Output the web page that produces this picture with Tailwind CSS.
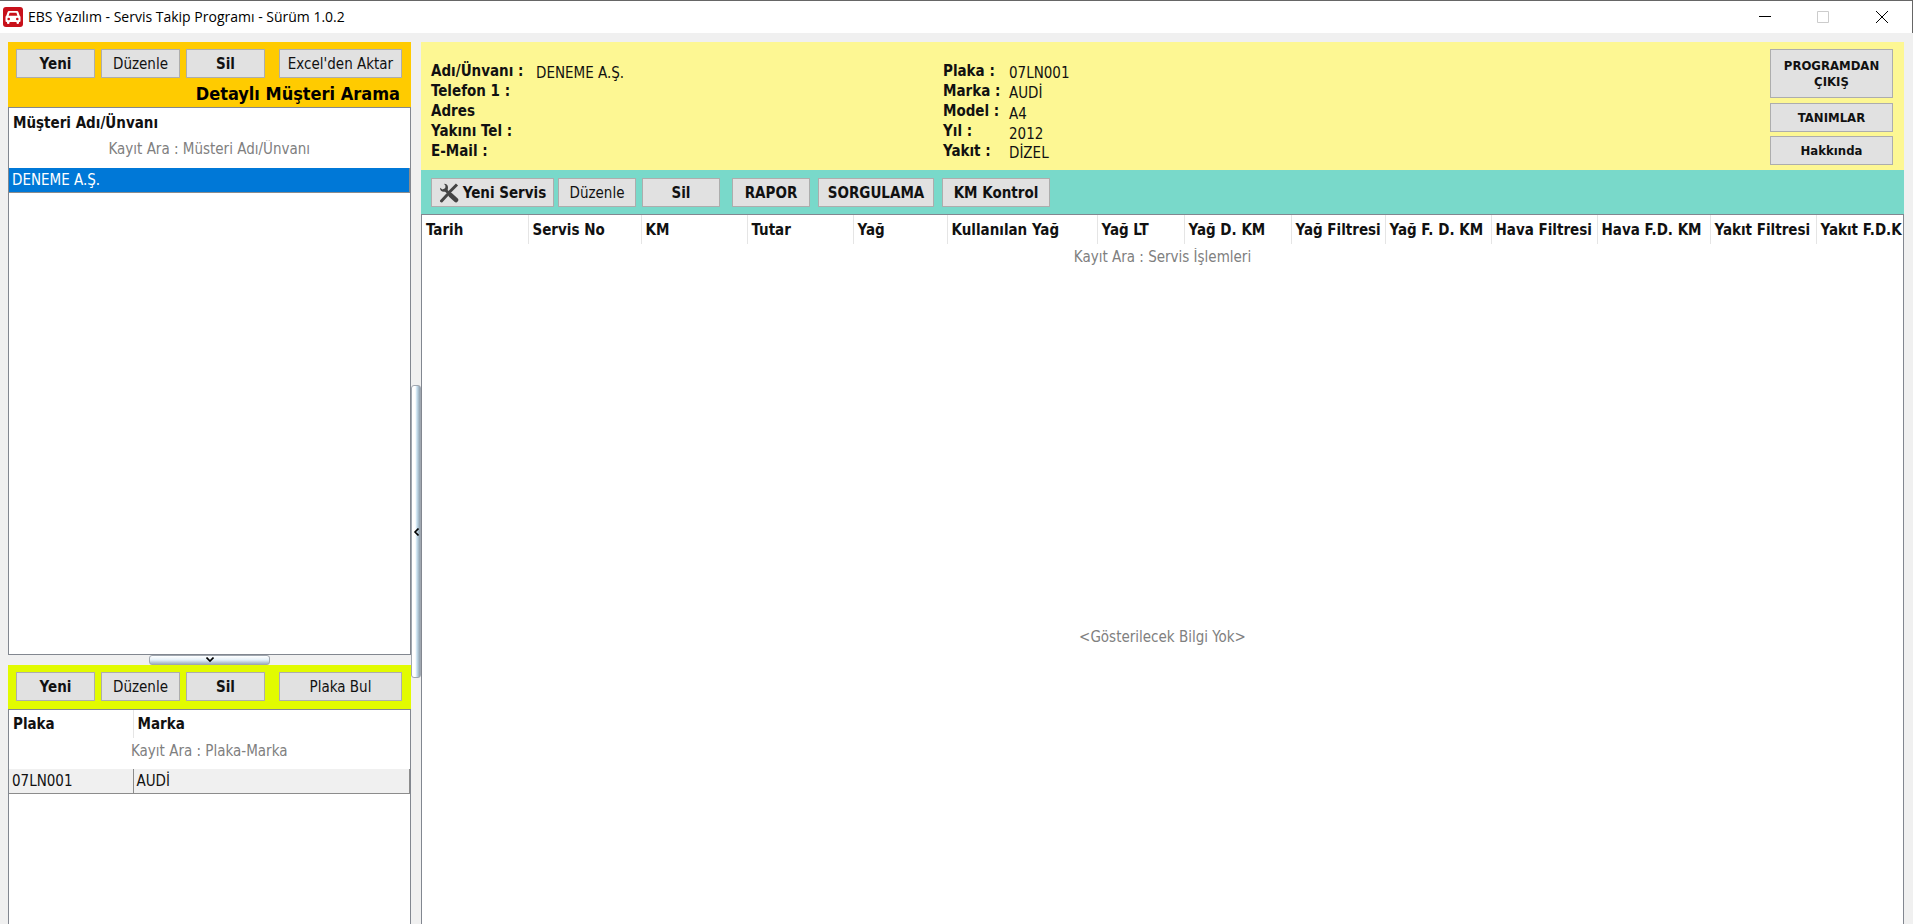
<!DOCTYPE html>
<html lang="tr">
<head>
<meta charset="utf-8">
<title>EBS Yazılım - Servis Takip Programı</title>
<script src="https://cdn.jsdelivr.net/npm/@tailwindcss/browser@4"></script>
</head>
<body class="flex h-screen flex-col overflow-hidden bg-[#f0f0f0] font-['DejaVu_Sans_Condensed','DejaVu_Sans',sans-serif] text-[15px] leading-5 text-[#111]">

<header class="flex h-[33px] shrink-0 items-center border-t border-r border-[#666] bg-white pl-[3px] font-['Open_Sans',sans-serif] text-sm text-black">
  <svg class="h-5 w-5" viewBox="0 0 20 20" aria-hidden="true">
    <rect width="20" height="20" rx="3" fill="#c8101a"/>
    <path fill="#fff" d="M6 4h8q1 0 1.400 1l1.200 3.500q.9.500.9 1.500v4q0 1-1 1h-.5v1q0 1-1.200 1t-1.300-1v-1h-7v1q0 1-1.300 1t-1.200-1v-1h-.5q-1 0-1-1v-4q0-1 .9-1.500l1.200-3.500q.4-1 1.400-1zM6.600 5.800l-1 3h8.800l-1-3z"/>
    <circle cx="5.700" cy="12" r="1.300" fill="#c8101a"/><circle cx="14.300" cy="12" r="1.300" fill="#c8101a"/>
  </svg>
  <h1 class="ml-[5px] grow">EBS Yazılım - Servis Takip Programı - Sürüm 1.0.2</h1>
  <button class="grid h-full w-[58px] place-items-center" aria-label="Simge durumuna küçült"><svg width="12" height="12"><path d="M0 5.500h12" stroke="#000"/></svg></button>
  <button class="grid h-full w-[58px] place-items-center" aria-label="Ekranı kapla" disabled><svg width="12" height="12"><path d="M.5.500h11v11H.5z" fill="none" stroke="#ccc"/></svg></button>
  <button class="grid h-full w-[60px] place-items-center" aria-label="Kapat"><svg width="12" height="12"><path d="M0 0l12 12M12 0L0 12" stroke="#000"/></svg></button>
</header>

<div class="flex min-h-0 grow pt-[9px] pr-[9px] pl-2">

  <aside class="flex w-[403px] shrink-0 flex-col">
    <section class="bg-[#ffcb00] px-2 pt-[7px]">
      <div class="flex">
        <button class="h-[29px] w-[79px] border border-[#adadad] bg-[#e1e1e1] font-bold">Yeni</button>
        <button class="ml-[6px] h-[29px] w-[79px] border border-[#adadad] bg-[#e1e1e1]">Düzenle</button>
        <button class="ml-[6px] h-[29px] w-[79px] border border-[#adadad] bg-[#e1e1e1] font-bold">Sil</button>
        <button class="ml-[14px] h-[29px] w-[123px] border border-[#adadad] bg-[#e1e1e1]">Excel'den Aktar</button>
      </div>
      <div class="pt-1 pr-[3px] pb-[1px] text-right"><a href="#arama" class="text-lg leading-6 font-bold text-black">Detaylı Müşteri Arama</a></div>
    </section>

    <section class="h-[548px] shrink-0 border border-[#828790] bg-white">
      <table class="w-full table-fixed border-collapse">
        <thead>
          <tr class="h-[29px]"><th class="pl-1 text-left font-bold">Müşteri Adı/Ünvanı</th></tr>
          <tr class="h-[31px]"><td class="align-top"><input class="block h-[24px] w-full text-center placeholder:text-[#808080]" aria-label="Müşteri ara" placeholder="Kayıt Ara : Müsteri Adı/Ünvanı"></td></tr>
        </thead>
        <tbody><tr class="h-6 border-r border-b border-[#8c8c8c] bg-[#0078d7] text-white"><td class="pl-[3px]">DENEME A.Ş.</td></tr></tbody>
      </table>
    </section>

    <button class="grid h-[10px] w-[121px] shrink-0 place-items-center self-center rounded-[3px] border border-[#a0a7b0] bg-linear-to-b from-white via-[#e4f0f8] to-[#9fb0c0]" aria-label="Üst bölümü daralt"><svg width="8" height="6"><path d="M.5.500L4 4 7.500.500" fill="none" stroke="#000" stroke-width="1.600"/></svg></button>

    <section class="flex h-11 shrink-0 bg-[#e2fb00] px-2 pt-[7px]">
      <button class="h-[29px] w-[79px] border border-[#adadad] bg-[#e1e1e1] font-bold">Yeni</button>
      <button class="ml-[6px] h-[29px] w-[79px] border border-[#adadad] bg-[#e1e1e1]">Düzenle</button>
      <button class="ml-[6px] h-[29px] w-[79px] border border-[#adadad] bg-[#e1e1e1] font-bold">Sil</button>
      <button class="ml-[14px] h-[29px] w-[123px] border border-[#adadad] bg-[#e1e1e1]">Plaka Bul</button>
    </section>

    <section class="grow border border-b-0 border-[#828790] bg-white">
      <table class="w-full table-fixed border-collapse">
        <colgroup><col class="w-[124px]"><col></colgroup>
        <thead>
          <tr class="h-[28px]"><th class="border-r border-[#e5e5e5] pl-1 text-left font-bold">Plaka</th><th class="pl-1 text-left font-bold">Marka</th></tr>
          <tr class="h-[31px]"><td colspan="2" class="align-top"><input class="block h-[25px] w-full text-center placeholder:text-[#808080]" aria-label="Plaka ara" placeholder="Kayıt Ara : Plaka-Marka"></td></tr>
        </thead>
        <tbody><tr class="h-6 border-r border-b border-[#8c8c8c] bg-[#f0f0f0]"><td class="border-r border-[#8c8c8c] pl-[3px]">07LN001</td><td class="pl-[3px]">AUDİ</td></tr></tbody>
      </table>
    </section>
  </aside>

  <div class="w-[10px] shrink-0 pt-[343px]">
    <button class="grid h-[293px] w-[10px] place-items-center rounded-[3px] border border-[#a0a7b0] bg-linear-to-r from-white from-40% via-[#c9e2f2] via-60% to-[#8f9fad]" aria-label="Sol bölümü daralt"><svg width="6" height="8"><path d="M5.500.500L2 4l3.500 3.500" fill="none" stroke="#000" stroke-width="1.600"/></svg></button>
  </div>

  <main class="flex min-w-0 grow flex-col">
    <section class="flex h-32 shrink-0 bg-[#fdf793] pt-[7px] pr-[11px] pl-[10px]">
      <dl class="grid w-[512px] auto-rows-[20px] grid-cols-[105px_1fr] pt-3">
        <dt class="font-bold">Adı/Ünvanı :</dt><dd class="pt-0.5">DENEME A.Ş.</dd>
        <dt class="font-bold">Telefon 1 :</dt><dd></dd>
        <dt class="font-bold">Adres</dt><dd></dd>
        <dt class="font-bold">Yakını Tel :</dt><dd></dd>
        <dt class="font-bold">E-Mail :</dt><dd></dd>
      </dl>
      <dl class="grid auto-rows-[20px] grid-cols-[66px_1fr] pt-3">
        <dt class="font-bold">Plaka :</dt><dd class="pt-0.5">07LN001</dd>
        <dt class="font-bold">Marka :</dt><dd class="pt-0.5">AUDİ</dd>
        <dt class="font-bold">Model :</dt><dd class="pt-[3px]">A4</dd>
        <dt class="font-bold">Yıl :</dt><dd class="pt-[3px]">2012</dd>
        <dt class="font-bold">Yakıt :</dt><dd class="pt-0.5">DİZEL</dd>
      </dl>
      <div class="ml-auto flex w-[123px] flex-col text-[13px] leading-4 font-bold">
        <button class="h-[49px] border border-[#adadad] bg-[#e1e1e1]">PROGRAMDAN<br>ÇIKIŞ</button>
        <button class="mt-[5px] h-[29px] border border-[#adadad] bg-[#e1e1e1]">TANIMLAR</button>
        <button class="mt-1 h-[29px] border border-[#adadad] bg-[#e1e1e1]">Hakkında</button>
      </div>
    </section>

    <nav class="flex h-11 shrink-0 bg-[#79d9ca] pt-2 pl-[10px] font-bold">
      <button class="flex h-[29px] w-[123px] items-center justify-center gap-1 border border-[#adadad] bg-[#e1e1e1] whitespace-nowrap">
        <svg class="h-5 w-5 shrink-0" viewBox="0 0 20 20" fill="none" stroke="#444" aria-hidden="true">
          <path d="M18 1.500L9 10.500" stroke-width="3"/><path d="M8.500 11.500L2.500 18" stroke-width="3" stroke-linecap="round"/>
          <path d="M5.500 6l5 5" stroke-width="3"/><path d="M11.500 12l5.500 5" stroke-width="4.500" stroke-linecap="round"/><path d="M5 .8a4 4 0 1 1-4 4l2.500 1.700 2.700-1.200.3-2.500z" fill="#444" stroke="none"/>
        </svg>Yeni Servis</button>
      <button class="ml-1 h-[29px] w-[78px] border border-[#adadad] bg-[#e1e1e1] font-normal">Düzenle</button>
      <button class="ml-[6px] h-[29px] w-[78px] border border-[#adadad] bg-[#e1e1e1]">Sil</button>
      <button class="ml-3 h-[29px] w-[78px] border border-[#adadad] bg-[#e1e1e1]">RAPOR</button>
      <button class="ml-2 h-[29px] w-[116px] border border-[#adadad] bg-[#e1e1e1]">SORGULAMA</button>
      <button class="ml-2 h-[29px] w-[108px] border border-[#adadad] bg-[#e1e1e1]">KM Kontrol</button>
    </nav>

    <section class="flex grow flex-col overflow-hidden border border-b-0 border-[#828790] bg-white">
      <table class="w-full table-fixed border-collapse">
        <colgroup><col class="w-[106px]"><col class="w-[113px]"><col class="w-[106px]"><col class="w-[106px]"><col class="w-[94px]"><col class="w-[150px]"><col class="w-[87px]"><col class="w-[107px]"><col class="w-[94px]"><col class="w-[106px]"><col class="w-[106px]"><col class="w-[113px]"><col class="w-[106px]"><col></colgroup>
        <thead>
          <tr class="h-[29px] text-left whitespace-nowrap">
            <th class="border-r border-[#e5e5e5] pl-1">Tarih</th>
            <th class="border-r border-[#e5e5e5] pl-1">Servis No</th>
            <th class="border-r border-[#e5e5e5] pl-1">KM</th>
            <th class="border-r border-[#e5e5e5] pl-1">Tutar</th>
            <th class="border-r border-[#e5e5e5] pl-1">Yağ</th>
            <th class="border-r border-[#e5e5e5] pl-1">Kullanılan Yağ</th>
            <th class="border-r border-[#e5e5e5] pl-1">Yağ LT</th>
            <th class="border-r border-[#e5e5e5] pl-1">Yağ D. KM</th>
            <th class="border-r border-[#e5e5e5] pl-1">Yağ Filtresi</th>
            <th class="border-r border-[#e5e5e5] pl-1">Yağ F. D. KM</th>
            <th class="border-r border-[#e5e5e5] pl-1">Hava Filtresi</th>
            <th class="border-r border-[#e5e5e5] pl-1">Hava F.D. KM</th>
            <th class="border-r border-[#e5e5e5] pl-1">Yakıt Filtresi</th>
            <th class="overflow-hidden pl-1">Yakıt F.D.K</th>
          </tr>
          <tr><td colspan="14"><input class="h-[25px] w-full text-center placeholder:text-[#808080]" aria-label="Servis işlemi ara" placeholder="Kayıt Ara : Servis İşlemleri"></td></tr>
        </thead>
      </table>
      <p class="pt-[358px] text-center text-[#808080]">&lt;Gösterilecek Bilgi Yok&gt;</p>
    </section>
  </main>
</div>
</body>
</html>
